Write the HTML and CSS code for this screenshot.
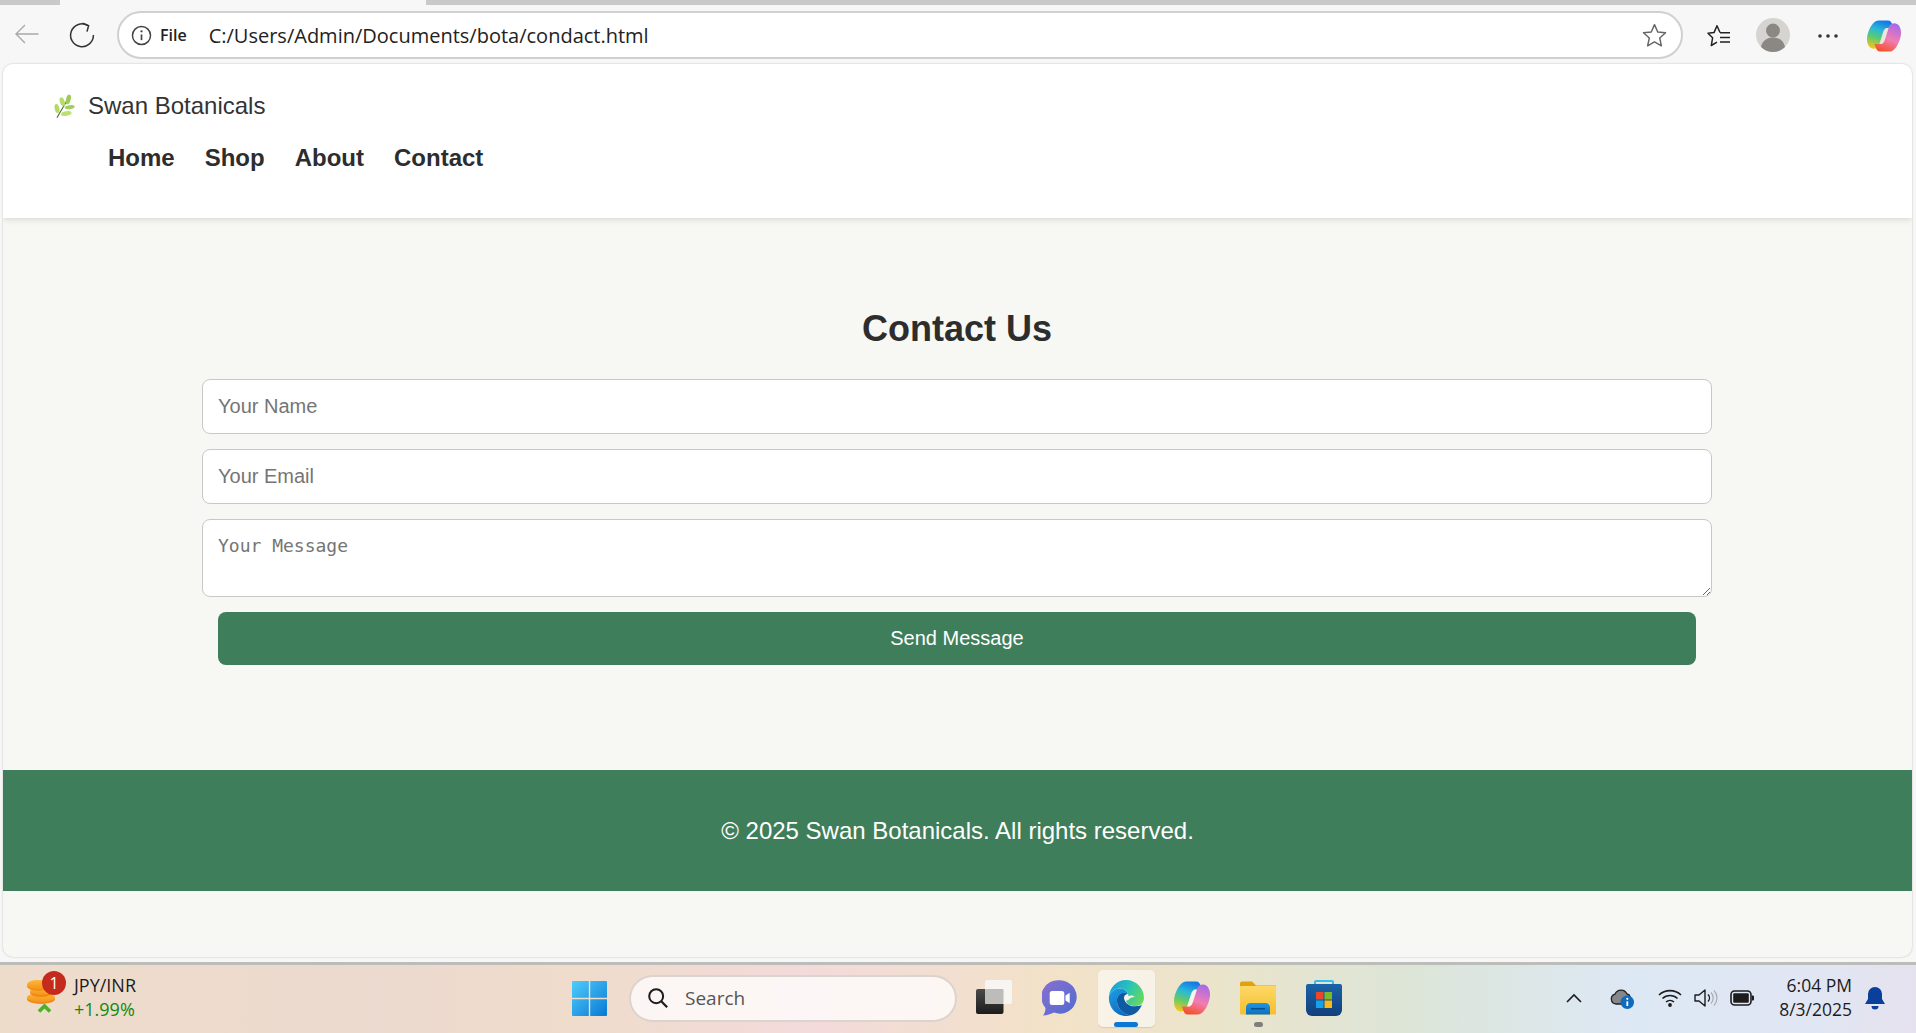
FILE: index.html
```html
<!DOCTYPE html>
<html lang="en">
<head>
    <meta charset="UTF-8">
    <meta name="viewport" content="width=device-width, initial-scale=1.0">
    <title>Contact Us - Swan Botanicals</title>
    <link rel="stylesheet" href="styles.css">
</head>
<body>
    <!-- Browser tab strip and toolbar -->
    <div class="tabstrip"><span class="tab-light"></span></div>
    <div class="toolbar">
        <svg class="ico-back" viewBox="0 0 24 20"><path d="M23.5 10H1M10 1l-9 9 9 9" fill="none" stroke="#a9a9a9" stroke-width="1.4"/></svg>
        <svg class="ico-reload" viewBox="0 0 26 26"><path d="M19 3.6A11.4 11.4 0 1 0 24.4 13" fill="none" stroke="#333" stroke-width="1.5"/><path d="M13.5 1.2 19.6 3.6 18 9.6" fill="none" stroke="#333" stroke-width="1.5"/></svg>
        <div class="addressbar">
            <svg class="ico-info" viewBox="0 0 20 20"><circle cx="10" cy="10" r="8.6" fill="none" stroke="#444" stroke-width="1.4"/><path d="M10 9v5.4" stroke="#444" stroke-width="1.6"/><circle cx="10" cy="6" r="1.1" fill="#444"/></svg>
            <span class="addr-file">File</span>
            <span class="addr-url">C:/Users/Admin/Documents/bota/condact.html</span>
            <svg class="ico-star" viewBox="0 0 24 24"><path d="M12 1.6l3.1 7 7.5.8-5.6 5 1.6 7.5-6.6-3.8-6.6 3.8 1.6-7.5-5.600-5 7.500-.8z" fill="none" stroke="#666" stroke-width="1.4" stroke-linejoin="round"/></svg>
        </div>
        <svg class="ico-favs" viewBox="0 0 24 24"><path d="M13 8.5 10 1.8 7 8.6l-6 .7 4.6 4.5-1.3 7.7L10 18.2" fill="none" stroke="#222" stroke-width="1.5" stroke-linejoin="round"/><path d="M13 8.800h10M13 13.400h10M13 18h10" stroke="#222" stroke-width="1.5"/></svg>
        <svg class="ico-avatar" viewBox="0 0 34 34"><circle cx="17" cy="17" r="17" fill="#d5d4d0"/><circle cx="17" cy="12.6" r="7" fill="#8b8884"/><path d="M5 29c1.500-7 6.500-9.500 12-9.500S27.500 22 29 29a17 17 0 0 1-24 0z" fill="#8b8884"/></svg>
        <svg class="ico-more" viewBox="0 0 20 4"><circle cx="2" cy="2" r="1.8" fill="#333"/><circle cx="10" cy="2" r="1.8" fill="#333"/><circle cx="18" cy="2" r="1.8" fill="#333"/></svg>
        <svg class="ico-copilot" viewBox="0 0 36 33">
            <defs>
                <linearGradient id="cpA" x1=".6" y1="0" x2=".3" y2="1"><stop offset="0" stop-color="#1478e6"/><stop offset=".35" stop-color="#2bb8d8"/><stop offset=".65" stop-color="#5fcb6a"/><stop offset="1" stop-color="#f4c51c"/></linearGradient>
                <linearGradient id="cpB" x1=".7" y1="0" x2=".35" y2="1"><stop offset="0" stop-color="#a86ae6"/><stop offset=".55" stop-color="#f27cb4"/><stop offset="1" stop-color="#f2532c"/></linearGradient>
            </defs>
            <path d="M12 0H22C25 0 26 2 27 5L28 8H22C19 8 18 10 17 13L13 26C12 29 9 30 7 30C3 30 0 26 0 20C0 12 6 0 12 0Z" fill="url(#cpA)"/>
            <path d="M24 33H14C11 33 10 31 9 28L8 25H14C17 25 18 23 19 20L23 7C24 4 27 3 29 3C33 3 36 7 36 13C36 21 30 33 24 33Z" fill="url(#cpB)"/>
            <path d="M17 13C18 10 19 8 22 8H23L19 20C18 23 17 25 14 25H13Z" fill="#e9d9c8" opacity=".6"/>
        </svg>
    </div>

    <div class="page">
        <header class="site-header">
            <div class="brand">
                <svg class="ico-leaf" viewBox="0 0 66 72">
                    <path d="M12 70C22 50 34 34 44 14" fill="none" stroke="#56703a" stroke-width="3.500"/>
                    <ellipse cx="46" cy="15" rx="7" ry="15" fill="#9ccc52" transform="rotate(15 46 15)"/>
                    <ellipse cx="28" cy="22" rx="7" ry="14" fill="#b8dc6c" transform="rotate(-20 28 22)"/>
                    <ellipse cx="50" cy="38" rx="15" ry="6" fill="#9fd058" transform="rotate(-8 50 38)"/>
                    <ellipse cx="12" cy="42" rx="7" ry="14" fill="#b4da66" transform="rotate(-12 12 42)"/>
                    <ellipse cx="40" cy="57" rx="16" ry="7" fill="#bcdf72" transform="rotate(-10 40 57)"/>
                </svg>
                <span class="brand-name">Swan Botanicals</span>
            </div>
            <nav class="main-nav">
                <a href="#">Home</a>
                <a href="#">Shop</a>
                <a href="#">About</a>
                <a href="#">Contact</a>
            </nav>
        </header>

        <main class="contact">
            <h2>Contact Us</h2>
            <form class="contact-form" onsubmit="return false;">
                <input type="text" placeholder="Your Name">
                <input type="email" placeholder="Your Email">
                <textarea placeholder="Your Message"></textarea>
                <button type="submit">Send Message</button>
            </form>
        </main>

        <footer class="site-footer">© 2025 Swan Botanicals. All rights reserved.</footer>
    </div>

    <!-- Windows taskbar -->
    <div class="taskbar">
        <div class="widget">
            <svg class="ico-coins" viewBox="0 0 36 38">
                <defs>
                    <linearGradient id="coinA" x1="0" y1="0" x2="0" y2="1"><stop offset="0" stop-color="#fdb73a"/><stop offset="1" stop-color="#f7941a"/></linearGradient>
                </defs>
                <ellipse cx="15" cy="20" rx="14" ry="5" fill="#ee8a12"/>
                <ellipse cx="15" cy="18.500" rx="14" ry="4.500" fill="url(#coinA)"/>
                <ellipse cx="15" cy="13.500" rx="11" ry="4.500" fill="#ee8a12"/>
                <ellipse cx="15" cy="12" rx="11" ry="4" fill="url(#coinA)"/>
                <ellipse cx="12" cy="7" rx="11" ry="5" fill="#f0900f"/>
                <ellipse cx="12" cy="5.500" rx="11" ry="4.500" fill="url(#coinA)"/>
                <path d="M13 32.500l5.500-5.500 5.500 5.500" fill="none" stroke="#4fb028" stroke-width="3.600"/>
            </svg>
            <span class="widget-badge">1</span>
            <div class="widget-text">
                <span>JPY/INR</span>
                <span class="widget-up">+1.99%</span>
            </div>
        </div>
        <svg class="ico-start" viewBox="0 0 35 35">
            <defs>
                <linearGradient id="winA" x1="0" y1="0" x2="1" y2="1"><stop offset="0" stop-color="#4fcdfb"/><stop offset="1" stop-color="#0a78d4"/></linearGradient>
            </defs>
            <path d="M1 0h15.800v16.800H0V1a1 1 0 0 1 1-1zM18.200 0H34a1 1 0 0 1 1 1v15.800H18.200zM0 18.200h16.800V35H1a1 1 0 0 1-1-1zM18.200 18.200H35V34a1 1 0 0 1-1 1H18.200z" fill="url(#winA)"/>
        </svg>
        <div class="searchbox">
            <svg class="ico-search" viewBox="0 0 24 24"><circle cx="10" cy="10" r="7.600" fill="none" stroke="#1c1c1c" stroke-width="2.200"/><path d="M15.500 15.500 22 22" stroke="#1c1c1c" stroke-width="2.400"/></svg>
            <span>Search</span>
        </div>
        <div class="apps">
            <div class="app">
                <svg class="app-icon" viewBox="0 0 36 36">
                    <defs>
                        <linearGradient id="tvA" x1="0" y1="0" x2="0" y2="1"><stop offset="0" stop-color="#4a4a4a"/><stop offset="1" stop-color="#1c1c1c"/></linearGradient>
                    </defs>
                    <rect x="0" y="9" width="27.500" height="25" rx="2" fill="url(#tvA)"/>
                    <rect x="9" y="0" width="27" height="24" rx="2" fill="#f6f5f1"/>
                    <rect x="9" y="9" width="18.500" height="15" rx="1" fill="#bdbcb9"/>
                </svg>
            </div>
            <div class="app">
                <svg class="app-icon" viewBox="0 0 36 36">
                    <defs>
                        <linearGradient id="teamsA" x1="0" y1="0" x2="1" y2="1"><stop offset="0" stop-color="#8a6fd0"/><stop offset="1" stop-color="#4f6bd0"/></linearGradient>
                    </defs>
                    <path d="M18 .3a16.700 16.700 0 1 1-6 32.300C9 34 5 35.500 1 35.500c1.500-2 2.500-4.500 2.500-7.500A16.700 16.700 0 0 1 18 .3z" fill="url(#teamsA)"/>
                    <rect x="7.700" y="11" width="14.600" height="14" rx="2.500" fill="#fff"/>
                    <path d="M23.500 15.500l4.200-2.800v10.600l-4.200-2.800z" fill="#fff"/>
                </svg>
            </div>
            <div class="app app-active">
                <svg class="app-icon app-edge" viewBox="0 0 36 36">
                    <defs>
                        <linearGradient id="edgeA" x1="0" y1=".3" x2="1" y2=".7"><stop offset="0" stop-color="#1a9fdc"/><stop offset=".5" stop-color="#2cc4b4"/><stop offset="1" stop-color="#6ad95a"/></linearGradient>
                        <linearGradient id="edgeB" x1="0" y1="0" x2=".6" y2="1"><stop offset="0" stop-color="#1d9fe4"/><stop offset="1" stop-color="#0f6cc0"/></linearGradient>
                    </defs>
                    <path d="M1 16C3 11 7 8.500 12 8.500C16 8.500 19 11 20 14C15 11 8 14 9 22C10 29 15 34 22 35.500C20 36 19 36 18 36C8 36 0 27 1 16Z" fill="url(#edgeB)"/>
                    <path d="M9 22C8 14 15 11 20 14C16 14 15 18 17 21C19 25 24 27 29 26C31 26 33 25.500 34 24.500C32 30 27 35 22 35.500C15 34 10 29 9 22Z" fill="#0d5aa5"/>
                    <path d="M1 16C2 7 9 0 18 0C28 0 36 8 36 18C36 23 32 26 28 26C23 26 18.500 24 18 21C21 20 21 17 20 14C19 11 16 8.500 12 8.500C7 8.500 3 11 1 16Z" fill="url(#edgeA)"/>
                    <path d="M18.500 18C20 15 25 14.500 27 17C24 17 21.500 18 20 20.500Z" fill="#f0f6e0"/>
                </svg>
                <span class="app-pill"></span>
            </div>
            <div class="app">
                <svg class="app-icon" viewBox="0 0 36 33">
                    <path d="M12 0H22C25 0 26 2 27 5L28 8H22C19 8 18 10 17 13L13 26C12 29 9 30 7 30C3 30 0 26 0 20C0 12 6 0 12 0Z" fill="url(#cpA)"/>
                    <path d="M24 33H14C11 33 10 31 9 28L8 25H14C17 25 18 23 19 20L23 7C24 4 27 3 29 3C33 3 36 7 36 13C36 21 30 33 24 33Z" fill="url(#cpB)"/>
                    <path d="M17 13C18 10 19 8 22 8H23L19 20C18 23 17 25 14 25H13Z" fill="#fff" opacity=".6"/>
                </svg>
            </div>
            <div class="app">
                <svg class="app-icon" viewBox="0 0 36 33">
                    <defs>
                        <linearGradient id="folderA" x1="0" y1="0" x2="0" y2="1"><stop offset="0" stop-color="#fdd866"/><stop offset="1" stop-color="#f6bf2e"/></linearGradient>
                        <linearGradient id="folderB" x1="0" y1="0" x2="0" y2="1"><stop offset="0" stop-color="#1f96e4"/><stop offset="1" stop-color="#0f6fc0"/></linearGradient>
                    </defs>
                    <path d="M0 2a2 2 0 0 1 2-2h10l4 4h20v6H0z" fill="#dfa20c"/>
                    <rect x="0" y="4.500" width="36" height="28.500" rx="1" fill="url(#folderA)"/>
                    <path d="M6 33v-7a4.500 4.500 0 0 1 4.500-4.500h15A4.500 4.500 0 0 1 30 26v7z" fill="url(#folderB)"/>
                    <rect x="11" y="26.500" width="14" height="1.600" fill="#0a4f8c"/>
                </svg>
                <span class="app-dot"></span>
            </div>
            <div class="app">
                <svg class="app-icon" viewBox="0 0 36 36">
                    <defs>
                        <linearGradient id="storeA" x1="0" y1="0" x2="0" y2="1"><stop offset="0" stop-color="#1a63aa"/><stop offset="1" stop-color="#123f7c"/></linearGradient>
                    </defs>
                    <path d="M9 6V2a1 1 0 0 1 1-1h16a1 1 0 0 1 1 1v4" fill="none" stroke="#35bdf0" stroke-width="2"/>
                    <path d="M2 4h32a2 2 0 0 1 2 2v24a6 6 0 0 1-6 6H6a6 6 0 0 1-6-6V6a2 2 0 0 1 2-2z" fill="url(#storeA)"/>
                    <rect x="10" y="12" width="7.500" height="7.500" fill="#e8492c"/>
                    <rect x="18.500" y="12" width="7.500" height="7.500" fill="#7db928"/>
                    <rect x="10" y="20.500" width="7.500" height="7.500" fill="#12a3ea"/>
                    <rect x="18.500" y="20.500" width="7.500" height="7.500" fill="#fdb913"/>
                </svg>
            </div>
        </div>
        <div class="tray">
            <svg class="tray-chevron" viewBox="0 0 16 10"><path d="M1 9l7-7 7 7" fill="none" stroke="#1c1c1c" stroke-width="1.600"/></svg>
            <svg class="tray-cloud" viewBox="0 0 24 21">
                <path d="M6 16a5 5 0 0 1-1-9.800A6.500 6.500 0 0 1 17 6a4 4 0 0 1 2 7v3z" fill="#85878a" stroke="#222" stroke-width="1.300"/>
                <circle cx="17.300" cy="14.300" r="6.700" fill="#0f6cbd"/>
                <path d="M17.300 13.300v4.700" stroke="#fff" stroke-width="1.800"/><circle cx="17.300" cy="10.800" r="1.100" fill="#fff"/>
            </svg>
            <svg class="tray-wifi" viewBox="0 0 24 18"><path d="M1 6a16 16 0 0 1 22 0M4.500 9.500a11 11 0 0 1 15 0M8 13a6 6 0 0 1 8 0" fill="none" stroke="#1c1c1c" stroke-width="1.600"/><circle cx="12" cy="16" r="1.900" fill="#1c1c1c"/></svg>
            <svg class="tray-volume" viewBox="0 0 24 20"><path d="M1 7h4l6-5v16l-6-5H1z" fill="none" stroke="#1c1c1c" stroke-width="1.400" stroke-linejoin="round"/><path d="M14 6.500a5 5 0 0 1 0 7" fill="none" stroke="#1c1c1c" stroke-width="1.400"/><path d="M17 4.500a8 8 0 0 1 0 11M20 2.500a11 11 0 0 1 0 15" fill="none" stroke="#a9adb3" stroke-width="1.200"/></svg>
            <svg class="tray-battery" viewBox="0 0 24 16"><rect x="1" y="1" width="20" height="14" rx="3.500" fill="none" stroke="#1c1c1c" stroke-width="1.600"/><rect x="3.200" y="3.200" width="15.600" height="9.600" rx="1" fill="#1c1c1c"/><path d="M22 5.500h1a1 1 0 0 1 1 1v3a1 1 0 0 1-1 1h-1z" fill="#1c1c1c"/></svg>
            <div class="clock">
                <span>6:04 PM</span>
                <span>8/3/2025</span>
            </div>
            <svg class="tray-bell" viewBox="0 0 20 24"><path d="M10 1a7 7 0 0 1 7 7v5l3 5H0l3-5V8a7 7 0 0 1 7-7z" fill="#0a3f9c"/><path d="M6.500 20h7a3.500 3.500 0 0 1-7 0z" fill="#0a3f9c"/></svg>
        </div>
    </div>
</body>
</html>
```

FILE: styles.css
```css
* {
    box-sizing: border-box;
}

html, body {
    height: 100%;
}

body {
    margin: 0;
    overflow: hidden;
    display: flex;
    flex-direction: column;
    background-color: #f7f7f7;
    font-family: 'Liberation Sans', Arial, sans-serif;
    color: #2d2d2d;
}

svg {
    display: block;
    flex: none;
}

/* Browser chrome */
.tabstrip {
    height: 5px;
    flex: none;
    background-color: #c9c9c9;
    padding-left: 60px;
}

.tab-light {
    display: block;
    width: 366px;
    height: 5px;
    background-color: #f7f7f7;
}

.toolbar {
    height: 59px;
    flex: none;
    display: flex;
    align-items: flex-start;
    font-family: 'Open Sans', 'Noto Sans', sans-serif;
    color: #222;
}

.ico-back {
    width: 24px;
    height: 20px;
    margin: 19px 0 0 15px;
}

.ico-reload {
    width: 26px;
    height: 26px;
    margin: 17px 0 0 30px;
}

.addressbar {
    width: 1566px;
    height: 48px;
    margin: 6px 0 0 22px;
    padding: 0 14px 0 12px;
    display: flex;
    align-items: center;
    background-color: #fff;
    border: 2px solid #d0d0d0;
    border-radius: 24px;
}

.ico-info {
    width: 21px;
    height: 21px;
}

.addr-file {
    margin-left: 8px;
    font-size: 16px;
    font-weight: 600;
}

.addr-url {
    margin-left: 22px;
    font-size: 20px;
}

.ico-star {
    width: 25px;
    height: 25px;
    margin-left: auto;
}

.ico-favs {
    width: 24px;
    height: 24px;
    margin: 19px 0 0 24px;
}

.ico-avatar {
    width: 34px;
    height: 34px;
    margin: 13px 0 0 25px;
}

.ico-more {
    width: 20px;
    height: 4px;
    margin: 29px 0 0 28px;
}

.ico-copilot {
    width: 34px;
    height: 32px;
    margin: 15px 0 0 29px;
}

/* Site */
.page {
    flex: 1;
    margin: 0 4px 5px 3px;
    display: flex;
    flex-direction: column;
    background-color: #f7f8f3;
    border-radius: 10px;
    box-shadow: 0 0 2px rgba(0, 0, 0, 0.25);
    overflow: hidden;
}

.site-header {
    height: 154px;
    flex: none;
    background-color: #fff;
    box-shadow: 0 2px 6px rgba(0, 0, 0, 0.12);
    position: relative;
    padding: 30px 0 0 50px;
}

.brand {
    display: flex;
    align-items: center;
    height: 24px;
}

.ico-leaf {
    width: 22px;
    height: 25px;
}

.brand-name {
    margin-left: 13px;
    font-size: 24px;
    color: #333;
}

.main-nav {
    display: flex;
    gap: 30px;
    margin: 26px 0 0 55px;
}

.main-nav a {
    font-size: 24px;
    font-weight: bold;
    color: #2d2d2d;
    text-decoration: none;
}

.contact {
    padding: 90px 200px 0 199px;
    text-align: center;
}

.contact h2 {
    margin: 0 0 29px;
    font-size: 36px;
    line-height: 42px;
    color: #2d2d2d;
}

.contact-form {
    display: flex;
    flex-direction: column;
    gap: 15px;
}

.contact-form input,
.contact-form textarea {
    width: 100%;
    padding: 15px;
    font-size: 20px;
    background-color: #fff;
    border: 1px solid #c8c8c8;
    border-radius: 8px;
    outline: none;
}

.contact-form input {
    height: 55px;
    font-family: 'Liberation Sans', Arial, sans-serif;
}

.contact-form textarea {
    height: 78px;
    font-family: 'DejaVu Sans Mono', monospace;
    font-size: 18px;
    display: block;
}

.contact-form button {
    height: 53px;
    margin: 0 16px;
    background-color: #3f7e5a;
    color: #fff;
    font-family: 'Liberation Sans', Arial, sans-serif;
    font-size: 20px;
    border: none;
    border-radius: 8px;
}

.site-footer {
    height: 121px;
    margin-top: 105px;
    flex: none;
    display: flex;
    align-items: center;
    justify-content: center;
    background-color: #3f7e5a;
    color: #fff;
    font-size: 24px;
}

/* Taskbar */
.taskbar {
    height: 71px;
    flex: none;
    display: flex;
    align-items: center;
    padding-bottom: 2px;
    border-top: 3px solid #bcbcb8;
    background: linear-gradient(90deg, #eedccb 0%, #ecd9cf 20%, #efdccb 30%, #f3dadb 42%, #f2e2c8 55%, #ebe4cb 63%, #dce5d8 74%, #dde8f5 85%, #e1e6f3 95%, #e5e2ee 100%);
    font-family: 'Open Sans', 'Noto Sans', sans-serif;
    color: #1c1c1c;
}

.widget {
    width: 572px;
    flex: none;
    height: 100%;
    padding-left: 26px;
    display: flex;
    align-items: center;
    position: relative;
}

.ico-coins {
    width: 36px;
    height: 38px;
}

.widget-badge {
    position: absolute;
    left: 42px;
    top: 6px;
    width: 24px;
    height: 24px;
    border-radius: 50%;
    background-color: #c42b1c;
    color: #fff;
    font-size: 16px;
    line-height: 24px;
    text-align: center;
}

.widget-text {
    margin: -2px 0 0 12px;
    display: flex;
    flex-direction: column;
    font-size: 18px;
    line-height: 24px;
}

.widget-up {
    color: #118a11;
}

.ico-start {
    width: 35px;
    height: 35px;
}

.searchbox {
    width: 328px;
    height: 47px;
    margin-left: 22px;
    padding-left: 16px;
    display: flex;
    align-items: center;
    gap: 16px;
    background-color: rgba(255, 255, 255, 0.75);
    border: 2px solid rgba(150, 130, 120, 0.3);
    border-radius: 24px;
    font-size: 19px;
    color: #555;
}

.ico-search {
    width: 22px;
    height: 22px;
}

.apps {
    display: flex;
    margin-left: 4px;
    height: 100%;
}

.app {
    width: 66px;
    height: 100%;
    display: flex;
    align-items: center;
    justify-content: center;
    position: relative;
}

.app-icon {
    width: 36px;
    height: 36px;
}

.app-active::before {
    content: "";
    position: absolute;
    left: 5px;
    right: 4px;
    top: 5px;
    bottom: 4px;
    background-color: rgba(255, 255, 255, 0.55);
    border-radius: 5px;
    box-shadow: 0 1px 1px rgba(0, 0, 0, 0.1);
}

.app-edge {
    position: relative;
}

.app-pill {
    position: absolute;
    left: 21px;
    bottom: 4px;
    width: 24px;
    height: 5px;
    border-radius: 3px;
    background-color: #0a78d4;
}

.app-dot {
    position: absolute;
    left: 29px;
    bottom: 4px;
    width: 9px;
    height: 5px;
    border-radius: 3px;
    background-color: #7f7f7f;
}

.tray {
    margin-left: auto;
    padding-right: 31px;
    display: flex;
    align-items: center;
}

.tray-chevron {
    width: 16px;
    height: 10px;
}

.tray-cloud {
    width: 24px;
    height: 21px;
    margin-left: 28px;
}

.tray-wifi {
    width: 24px;
    height: 18px;
    margin-left: 24px;
}

.tray-volume {
    width: 24px;
    height: 20px;
    margin-left: 12px;
}

.tray-battery {
    width: 24px;
    height: 16px;
    margin-left: 12px;
}

.clock {
    width: 98px;
    margin-top: -2px;
    display: flex;
    flex-direction: column;
    align-items: flex-end;
    font-size: 17.5px;
    line-height: 24px;
}

.tray-bell {
    width: 20px;
    height: 24px;
    margin-left: 13px;
}
```
